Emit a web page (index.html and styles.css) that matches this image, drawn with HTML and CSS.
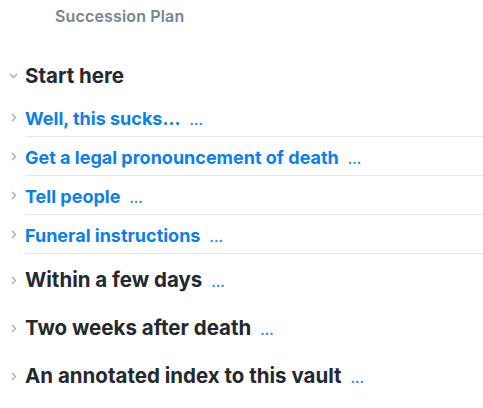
FILE: index.html
```html
<!DOCTYPE html>
<html>
<head>
<meta charset="utf-8">
<link rel="stylesheet" href="styles.css">
</head>
<body>
<div class="title">Succession Plan</div>
<div class="outline">
  <div class="head-row">
    <span class="chev"><svg width="9" height="6" viewBox="0 0 9 6"><path d="M1 1 L4.5 4.5 L8 1" fill="none" stroke="#a3a8ad" stroke-width="1.3"/></svg></span>
    <span class="head-text">Start here</span>
  </div>
  <div class="link-row">
    <span class="chev"><svg width="6" height="9" viewBox="0 0 6 9"><path d="M1 1 L4.5 4.5 L1 8" fill="none" stroke="#a3a8ad" stroke-width="1.3"/></svg></span>
    <span class="link-cell"><span class="link-text">Well, this sucks...</span><span class="more">...</span></span>
  </div>
  <div class="link-row">
    <span class="chev"><svg width="6" height="9" viewBox="0 0 6 9"><path d="M1 1 L4.5 4.5 L1 8" fill="none" stroke="#a3a8ad" stroke-width="1.3"/></svg></span>
    <span class="link-cell"><span class="link-text">Get a legal pronouncement of death</span><span class="more">...</span></span>
  </div>
  <div class="link-row">
    <span class="chev"><svg width="6" height="9" viewBox="0 0 6 9"><path d="M1 1 L4.5 4.5 L1 8" fill="none" stroke="#a3a8ad" stroke-width="1.3"/></svg></span>
    <span class="link-cell"><span class="link-text">Tell people</span><span class="more">...</span></span>
  </div>
  <div class="link-row">
    <span class="chev"><svg width="6" height="9" viewBox="0 0 6 9"><path d="M1 1 L4.5 4.5 L1 8" fill="none" stroke="#a3a8ad" stroke-width="1.3"/></svg></span>
    <span class="link-cell"><span class="link-text">Funeral instructions</span><span class="more">...</span></span>
  </div>
  <div class="big-row">
    <span class="chev"><svg width="6" height="9" viewBox="0 0 6 9"><path d="M1 1 L4.5 4.5 L1 8" fill="none" stroke="#a3a8ad" stroke-width="1.3"/></svg></span>
    <span class="head-text">Within a few days</span><span class="more">...</span>
  </div>
  <div class="big-row">
    <span class="chev"><svg width="6" height="9" viewBox="0 0 6 9"><path d="M1 1 L4.5 4.5 L1 8" fill="none" stroke="#a3a8ad" stroke-width="1.3"/></svg></span>
    <span class="head-text">Two weeks after death</span><span class="more">...</span>
  </div>
  <div class="big-row">
    <span class="chev"><svg width="6" height="9" viewBox="0 0 6 9"><path d="M1 1 L4.5 4.5 L1 8" fill="none" stroke="#a3a8ad" stroke-width="1.3"/></svg></span>
    <span class="head-text">An annotated index to this vault</span><span class="more">...</span>
  </div>
</div>
</body>
</html>
```

FILE: styles.css
```css
html, body {
  margin: 0;
  padding: 0;
  background: #ffffff;
  font-family: Inter, "Noto Sans", sans-serif;
}

.title {
  padding: 6px 0 0 55px;
  height: 20px;
  line-height: 20px;
  font-size: 16px;
  font-weight: 600;
  letter-spacing: 0.15px;
  color: #7a8592;
}

.outline {
  margin-top: 36px;
}

.head-row {
  display: flex;
  align-items: center;
  height: 28px;
  margin-bottom: 8px;
}

.head-row .chev {
  padding-left: 9px;
}

.head-text {
  font-size: 20.5px;
  line-height: 28px;
  font-weight: 700;
  color: #24292f;
}

.chev {
  width: 25px;
  flex: none;
  display: flex;
  padding-left: 11px;
  box-sizing: border-box;
}

.link-row {
  display: flex;
  height: 39px;
}

.link-row .chev {
  padding-top: 15px;
}

.link-cell {
  flex: 1;
  display: flex;
  align-items: baseline;
  padding-top: 10px;
  border-bottom: 1px solid #e6e8eb;
  box-sizing: border-box;
}

.link-text {
  font-size: 18px;
  line-height: 22px;
  font-weight: 700;
  color: #0b7fe8;
}

.more {
  margin-left: 9px;
  font-size: 14px;
  font-weight: 600;
  color: #2b8ae8;
}

.big-row {
  display: flex;
  align-items: baseline;
  height: 48px;
  padding-top: 12px;
  box-sizing: border-box;
}

.big-row .chev {
  align-self: flex-start;
  padding-top: 10px;
}
```
